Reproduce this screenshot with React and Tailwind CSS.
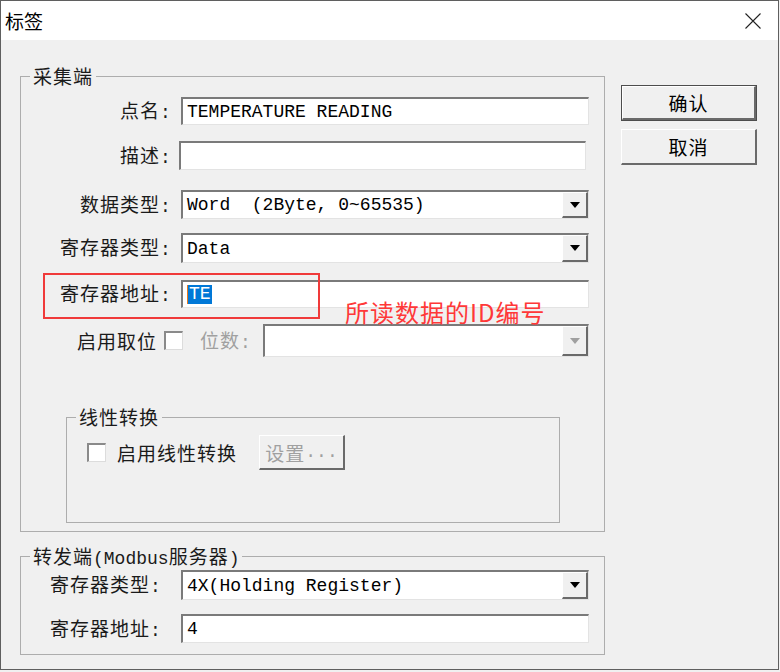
const cjk = "font-['Noto_Sans_CJK_SC',sans-serif]";
const mono = "font-['Liberation_Mono','Noto_Sans_CJK_SC',monospace]";

const sunken =
  "border-t-2 border-l-2 border-t-[#7a7a7a] border-l-[#7a7a7a] border-b border-r border-b-[#e3e3e3] border-r-[#e3e3e3] bg-white";
const raised =
  "border-t border-l border-t-white border-l-white border-b-2 border-r-2 border-b-[#6a6a6a] border-r-[#6a6a6a] bg-[#f0f0f0]";

function Colon() {
  return <span className={`inline-block w-[10px] text-left text-[18px] tracking-normal ${mono}`}>:</span>;
}

function Label({ children, className = "w-[149px]" }) {
  return (
    <div className={`shrink-0 text-right text-[19px] leading-none tracking-[1px] text-[#1a1a1a] ${className}`}>
      {children}
      <Colon />
    </div>
  );
}

function TextBox({ value, className = "", children }) {
  return (
    <div className={`flex h-full items-center pl-[4px] text-[18px] leading-none ${mono} ${sunken} ${className}`}>
      {children || <span className="whitespace-pre">{value}</span>}
    </div>
  );
}

function Arrow({ color = "#000" }) {
  return (
    <svg width="10" height="6" viewBox="0 0 10 6">
      <path d="M0 0 L10 0 L5 6 Z" fill={color} />
    </svg>
  );
}

function Combo({ value, className = "", disabled = false }) {
  return (
    <div className={`flex h-full items-stretch text-[18px] leading-none ${mono} ${sunken} ${className}`}>
      <div className="flex flex-1 items-center pl-[4px] whitespace-pre">{value}</div>
      <div className={`flex w-[26px] items-center justify-center ${raised}`}>
        <Arrow color={disabled ? "#a0a0a0" : "#000"} />
      </div>
    </div>
  );
}

function CheckBox({ className = "" }) {
  return (
    <div
      className={`h-[19px] w-[19px] shrink-0 border-t-2 border-l-2 border-t-[#8a8a8a] border-l-[#8a8a8a] border-b border-r border-b-[#dcdcdc] border-r-[#dcdcdc] bg-white ${className}`}
    />
  );
}

function Group({ title, className = "", children }) {
  return (
    <div className={`relative flex flex-col border border-[#adadad] ${className}`}>
      <span className="absolute left-[9px] top-[-12px] bg-[#f0f0f0] px-[3px] text-[19px] leading-[22px] tracking-[1px] text-[#1a1a1a]">
        {title}
      </span>
      {children}
    </div>
  );
}

export default function App() {
  return (
    <div className={`h-[672px] w-[780px] bg-[#f0f0f0] text-black ${cjk}`}>
      <div className="flex h-[670px] w-[779px] flex-col border border-[#5f5f5f]">
        {/* title bar */}
        <div className="flex h-[39px] shrink-0 items-center justify-between bg-white pl-[4px] pr-[17px]">
          <span className="text-[19px] leading-none">标签</span>
          <svg width="16" height="16" viewBox="0 0 16 16">
            <path d="M0.5 0.5 L15.5 15.5 M15.5 0.5 L0.5 15.5" stroke="#222" strokeWidth="1.1" />
          </svg>
        </div>

        <div className="flex flex-1">
          <div className="ml-[19px] flex flex-col">
            <Group title="采集端" className="mt-[36px] h-[456px] w-[585px]">
              <div className="mt-[20px] flex h-[28px] items-center">
                <Label>点名</Label>
                <TextBox value="TEMPERATURE READING" className="ml-[11px] w-[408px]" />
              </div>
              <div className="mt-[16px] flex h-[29px] items-center">
                <Label>描述</Label>
                <TextBox value="" className="ml-[9px] w-[407px]" />
              </div>
              <div className="mt-[20px] flex h-[29px] items-center">
                <Label>数据类型</Label>
                <Combo value="Word  (2Byte, 0~65535)" className="ml-[11px] w-[408px]" />
              </div>
              <div className="mt-[14px] flex h-[30px] items-center">
                <Label>寄存器类型</Label>
                <Combo value="Data" className="ml-[11px] w-[408px]" />
              </div>
              <div className="mt-[17px] flex h-[28px] items-center">
                <Label>寄存器地址</Label>
                <TextBox className="ml-[11px] w-[408px]">
                  <span className="h-[19px] w-[1px] bg-[#e87a1e]" />
                  <span className="bg-[#0078d7] px-[1px] leading-[19px] text-white">TE</span>
                </TextBox>
              </div>
              <div className="mt-[16px] flex h-[33px] items-center pl-[56px]">
                <span className="text-[19px] leading-none tracking-[1px] text-[#1a1a1a]">启用取位</span>
                <CheckBox className="ml-[7px]" />
                <span className="ml-[17px] text-[19px] leading-none tracking-[1px] text-[#a0a0a0]">
                  位数
                  <Colon />
                </span>
                <Combo value="" disabled className="ml-[13px] w-[326px]" />
              </div>

              <Group title="线性转换" className="ml-[45px] mt-[60px] h-[106px] w-[494px]">
                <div className="mt-[17px] flex h-[35px] items-center pl-[20px]">
                  <CheckBox />
                  <span className="ml-[11px] text-[19px] leading-none tracking-[1px] text-[#1a1a1a]">启用线性转换</span>
                  <div className={`ml-[22px] flex h-[35px] w-[86px] items-center justify-center text-[19px] leading-none tracking-[1px] text-[#a0a0a0] ${raised}`}>
                    设置<span className={`text-[18px] tracking-normal ${mono}`}>...</span>
                  </div>
                </div>
              </Group>

              {/* annotation */}
              <div className="absolute left-[22px] top-[196px] h-[46px] w-[277px] border-2 border-[#f03a3a]" />
              <span className="absolute left-[324px] top-[223px] text-[24px] leading-none tracking-[1px] text-[#ff3838]">
                所读数据的ID编号
              </span>
            </Group>

            <Group
              title={
                <>
                  转发端<span className={`text-[18px] tracking-normal ${mono}`}>(Modbus</span>服务器
                  <span className={`text-[18px] tracking-normal ${mono}`}>)</span>
                </>
              }
              className="mt-[24px] h-[99px] w-[585px]"
            >
              <div className="mt-[13px] flex h-[30px] items-center">
                <Label className="w-[139px]">寄存器类型</Label>
                <Combo value="4X(Holding Register)" className="ml-[21px] w-[408px]" />
              </div>
              <div className="mt-[14px] flex h-[29px] items-center">
                <Label className="w-[139px]">寄存器地址</Label>
                <TextBox value="4" className="ml-[21px] w-[408px]" />
              </div>
            </Group>
          </div>

          <div className="ml-[16px] mt-[45px] flex flex-col gap-[8px]">
            <div className="h-[36px] w-[136px] border border-[#4d4d4d]">
              <div className={`flex h-full items-center justify-center text-[19px] leading-none tracking-[1px] ${raised}`}>
                确认
              </div>
            </div>
            <div className={`flex h-[36px] w-[136px] items-center justify-center text-[19px] leading-none tracking-[1px] ${raised}`}>
              取消
            </div>
          </div>
        </div>
      </div>
    </div>
  );
}
